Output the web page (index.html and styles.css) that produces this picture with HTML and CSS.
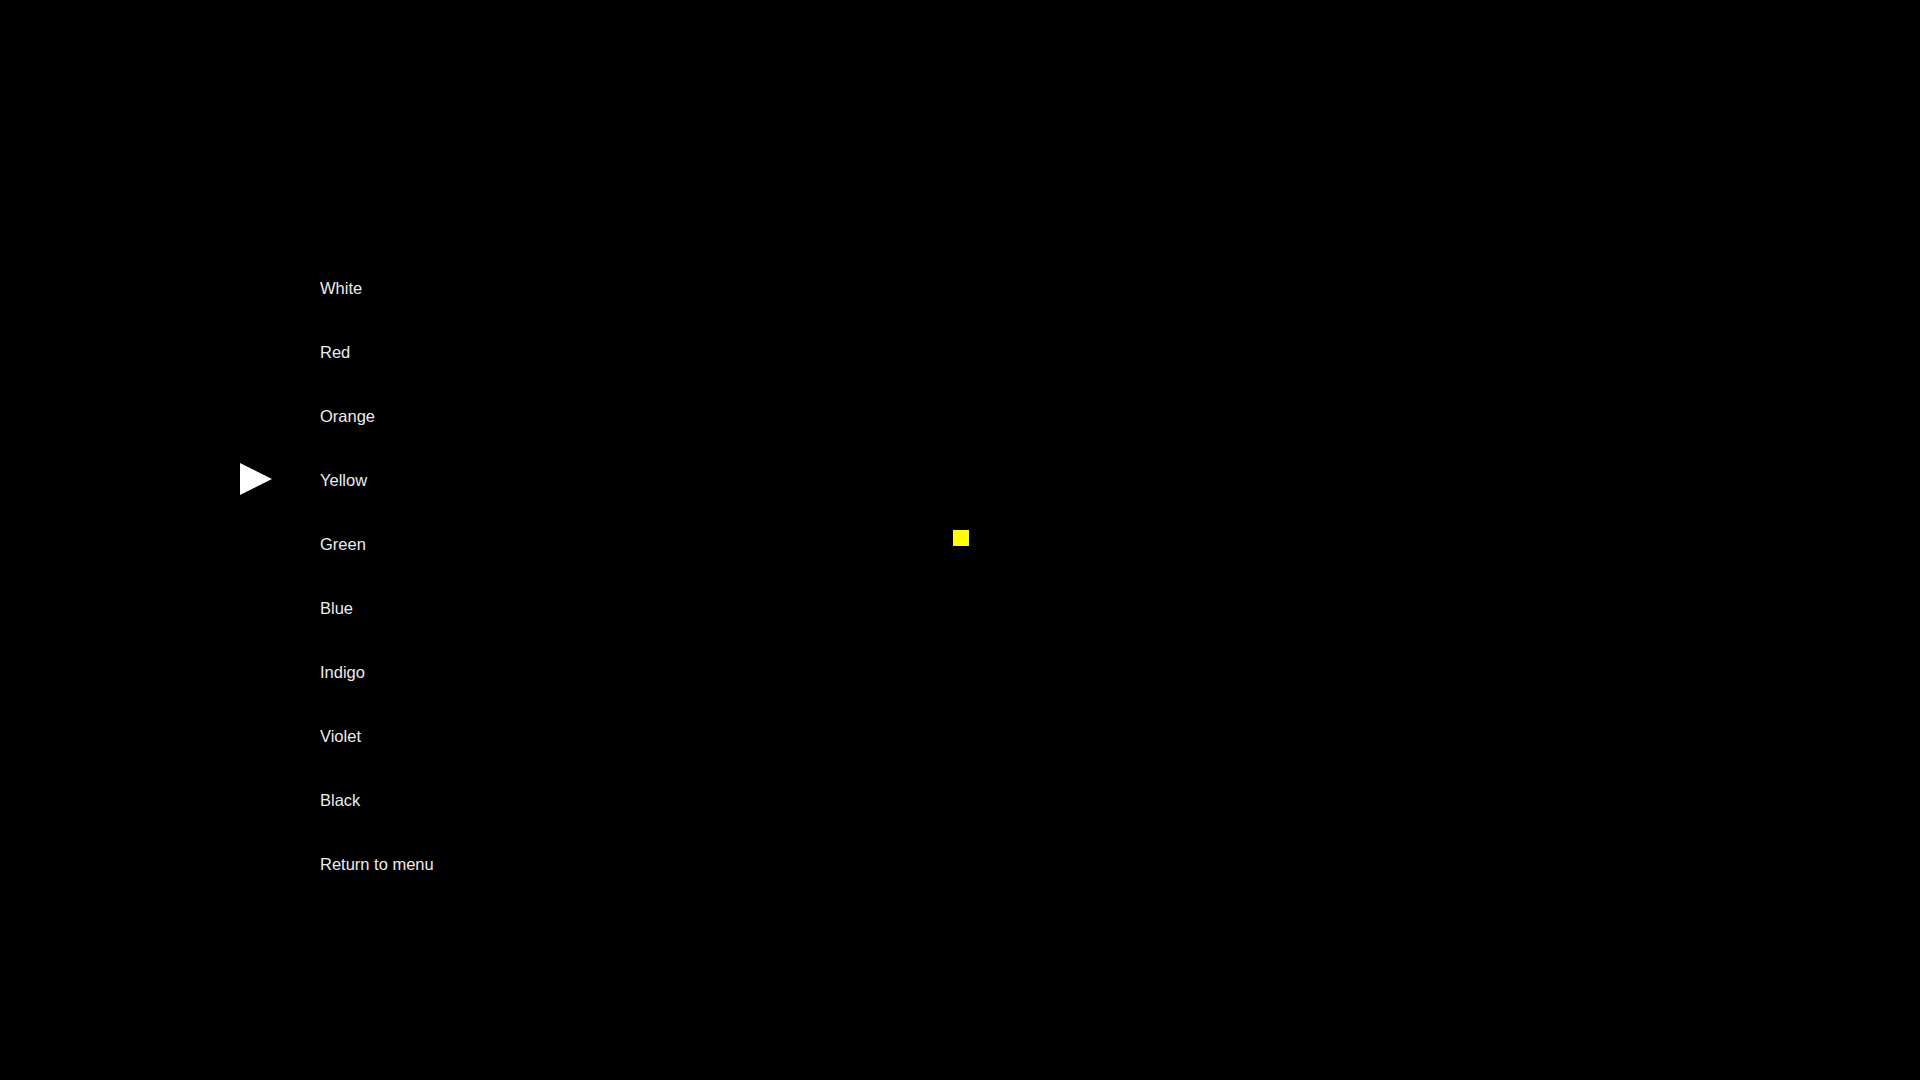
FILE: index.html
```html
<!DOCTYPE html>
<html lang="en">
<head>
<meta charset="utf-8">
<title>Colour menu</title>
<link rel="stylesheet" href="styles.css">
</head>
<body>
<main class="screen">
  <ul class="menu">
    <li class="item"><span class="cursor"></span><span class="label">White</span></li>
    <li class="item"><span class="cursor"></span><span class="label">Red</span></li>
    <li class="item"><span class="cursor"></span><span class="label">Orange</span></li>
    <li class="item selected"><span class="cursor"><svg viewBox="0 0 32 32" width="32" height="32"><polygon points="0,0 32,16 0,32" fill="#ffffff"/></svg></span><span class="label">Yellow</span></li>
    <li class="item"><span class="cursor"></span><span class="label">Green</span></li>
    <li class="item"><span class="cursor"></span><span class="label">Blue</span></li>
    <li class="item"><span class="cursor"></span><span class="label">Indigo</span></li>
    <li class="item"><span class="cursor"></span><span class="label">Violet</span></li>
    <li class="item"><span class="cursor"></span><span class="label">Black</span></li>
    <li class="item"><span class="cursor"></span><span class="label">Return to menu</span></li>
  </ul>
  <div class="swatch"></div>
</main>
</body>
</html>
```

FILE: styles.css
```css
html, body {
  margin: 0;
  padding: 0;
  background: #000000;
}

.screen {
  position: relative;
  width: 1920px;
  height: 1080px;
  overflow: hidden;
  background: #000000;
  font-family: "Liberation Sans", Arial, sans-serif;
}

.menu {
  list-style: none;
  margin: 0;
  padding: 256px 0 0 240px;
  display: flex;
  flex-direction: column;
}

.item {
  height: 64px;
  display: flex;
  align-items: center;
  gap: 48px;
}

.cursor {
  width: 32px;
  height: 32px;
  display: block;
}

.cursor svg {
  display: block;
  margin-top: -1px;
}

.label {
  color: #ececec;
  font-size: 16.5px;
  line-height: 64px;
}

.swatch {
  position: absolute;
  left: 953px;
  top: 530px;
  width: 16px;
  height: 16px;
  background: #ffff00;
}
```
